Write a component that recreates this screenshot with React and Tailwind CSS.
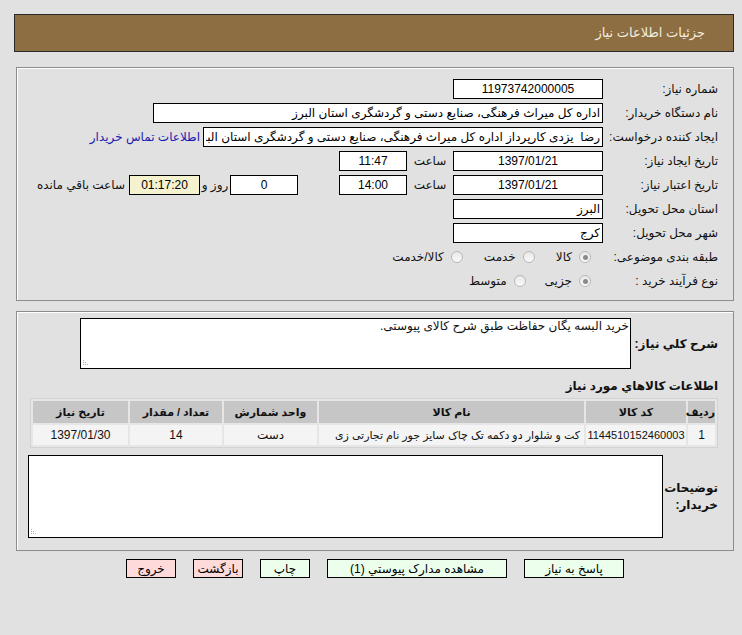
import React from "react";

const font = { fontFamily: '"Liberation Sans", "DejaVu Sans", sans-serif' };

function Field({ value, className = "", center = false }) {
    return (
        <input
            readOnly
            value={value}
            dir="rtl"
            className={`h-[20px] border border-black bg-white px-[2px] text-[12px] text-black outline-none ${center ? "text-center" : "text-right"} ${className}`}
        />
    );
}

function Radio({ checked, label }) {
    return (
        <div className="flex items-center gap-[7px]">
            <span className="flex h-[12px] w-[12px] items-center justify-center rounded-full border border-[#b8b8b8] bg-gradient-to-b from-[#e8e8e8] to-[#fafafa]">
                {checked && <span className="h-[5px] w-[5px] rounded-full bg-[#8a8a8a]" />}
            </span>
            <span>{label}</span>
        </div>
    );
}

function Row({ label, children }) {
    return (
        <div className="flex h-[24px] items-center gap-[5px]">
            <div className="w-[110px] shrink-0 whitespace-nowrap text-right">{label}</div>
            {children}
        </div>
    );
}

function Btn({ children, pink, className = "" }) {
    return (
        <button
            className={`h-[19px] border border-black text-[12px] leading-none text-black ${pink ? "bg-[#ffdada]" : "bg-[#ecffec]"} ${className}`}
        >
            {children}
        </button>
    );
}

// textarea with the resize grip drawn at the bottom-left, as the rtl page shows it
function Area({ value, className = "" }) {
    return (
        <div className={`relative shrink-0 ${className}`}>
            <textarea
                readOnly
                dir="rtl"
                value={value}
                className="h-full w-full resize-none border border-black bg-white px-[1px] text-[12px] leading-[15px] outline-none"
            />
            <svg className="absolute bottom-[3px] left-[3px]" width="6" height="6" viewBox="0 0 6 6">
                <rect x="0" y="0" width="1" height="1" fill="#b0b0b0" />
                <rect x="0" y="2" width="1" height="1" fill="#b0b0b0" />
                <rect x="2" y="2" width="1" height="1" fill="#b0b0b0" />
                <rect x="0" y="4" width="1" height="1" fill="#b0b0b0" />
                <rect x="2" y="4" width="1" height="1" fill="#b0b0b0" />
                <rect x="4" y="4" width="1" height="1" fill="#b0b0b0" />
            </svg>
        </div>
    );
}

export default function App() {
    const items = [
        { row: 1, code: "1144510152460003", name: "کت و شلوار دو دکمه تک چاک سایز جور نام تجارتی زی", unit: "دست", qty: 14, date: "1397/01/30" },
    ];

    return (
        <div dir="rtl" style={font} className="min-h-[635px] w-[742px] bg-[#e1e1e1] pt-[14px] text-[12px] text-[#111]">
            <div className="ml-[14px] mr-[8px] flex h-[38px] items-center border border-[#2a2a2a] bg-[#8c6e42] pr-[28px] text-[13px] text-[#f4ecdc]">
                جزئیات اطلاعات نیاز
            </div>

            <div className="ml-[16px] mr-[8px] mt-[15px] border border-[#8c8c8c] px-[15px] pb-[7px] pt-[9px] shadow-[inset_1px_1px_0_#ffffff]">
                <Row label="شماره نیاز:">
                    <Field value="11973742000005" center className="w-[150px]" />
                </Row>
                <Row label="نام دستگاه خریدار:">
                    <Field value="اداره کل میراث فرهنگی، صنایع دستی و گردشگری استان البرز" className="w-[450px]" />
                </Row>
                <Row label="ایجاد کننده درخواست:">
                    <Field value="رضا  یزدی کارپرداز اداره کل میراث فرهنگی، صنایع دستی و گردشگری استان البرز" className="w-[400px]" />
                    <a className="mr-[-2px] whitespace-nowrap text-[#1a1ab0]">اطلاعات تماس خریدار</a>
                </Row>
                <div className="flex h-[24px] items-center">
                    <div className="w-[115px] shrink-0 whitespace-nowrap text-right">تاریخ ایجاد نیاز:</div>
                    <Field value="1397/01/21" center className="w-[150px]" />
                    <div className="w-[46px] text-center">ساعت</div>
                    <Field value="11:47" center className="w-[68px]" />
                </div>
                <div className="flex h-[24px] items-center">
                    <div className="w-[115px] shrink-0 whitespace-nowrap text-right">تاریخ اعتبار نیاز:</div>
                    <Field value="1397/01/21" center className="w-[150px]" />
                    <div className="w-[46px] text-center">ساعت</div>
                    <Field value="14:00" center className="w-[68px]" />
                    <div className="w-[41px]" />
                    <Field value="0" center className="w-[68px]" />
                    <div className="w-[30px] whitespace-nowrap text-center">روز و</div>
                    <Field value="01:17:20" center className="w-[71px] !bg-[#f5f2cf]" />
                    <div className="mr-[4px] whitespace-nowrap">ساعت باقي مانده</div>
                </div>
                <Row label="استان محل تحویل:">
                    <Field value="البرز" className="w-[150px]" />
                </Row>
                <Row label="شهر محل تحویل:">
                    <Field value="کرج" className="w-[150px]" />
                </Row>
                <Row label="طبقه بندی موضوعی:">
                    <div className="flex items-center gap-[21px] pr-[12px]">
                        <Radio checked label="کالا" />
                        <Radio label="خدمت" />
                        <Radio label="کالا/خدمت" />
                    </div>
                </Row>
                <Row label="نوع فرآیند خرید :">
                    <div className="flex items-center gap-[19px] pr-[12px]">
                        <Radio checked label="جزیی" />
                        <Radio label="متوسط" />
                    </div>
                </Row>
            </div>

            <div className="ml-[16px] mr-[8px] mt-[10px] border border-[#8c8c8c] px-[15px] pb-[12px] pt-[6px] shadow-[inset_1px_1px_0_#ffffff]">
                <div className="flex items-center">
                    <div className="w-[87px] shrink-0 whitespace-nowrap text-right font-bold">شرح کلي نياز:</div>
                    <Area value="خرید البسه یگان حفاظت طبق شرح کالای پیوستی." className="h-[51px] w-[551px]" />
                </div>

                <div className="mt-[8px] text-right font-bold">اطلاعات کالاهاي مورد نياز</div>

                <table className="ml-[2px] mt-[3px] w-[688px] table-fixed border-separate border border-[#d2d2d2] bg-[#e6e6e6] [border-spacing:2px]">
                    <thead>
                        <tr className="h-[22px] bg-[#c6c6c6] text-[11px]">
                            <th className="w-[27px] whitespace-nowrap font-bold">ردیف</th>
                            <th className="w-[100px] font-bold">کد کالا</th>
                            <th className="w-[265px] font-bold">نام کالا</th>
                            <th className="w-[93px] font-bold">واحد شمارش</th>
                            <th className="w-[92px] font-bold">تعداد / مقدار</th>
                            <th className="font-bold">تاریخ نیاز</th>
                        </tr>
                    </thead>
                    <tbody>
                        {items.map((it) => (
                            <tr key={it.row} className="h-[20px] bg-[#f4f4f4]">
                                <td className="text-center">{it.row}</td>
                                <td className="text-center text-[11px]">{it.code}</td>
                                <td className="overflow-hidden whitespace-nowrap pr-[4px] text-right text-[11px]">{it.name}</td>
                                <td className="text-center">{it.unit}</td>
                                <td className="text-center">{it.qty}</td>
                                <td className="text-center">{it.date}</td>
                            </tr>
                        ))}
                    </tbody>
                </table>

                <div className="ml-[-4px] mt-[7px] flex items-center">
                    <div className="w-[55px] shrink-0 text-right font-bold leading-[17px]">توضیحات خریدار:</div>
                    <Area value="" className="h-[83px] w-[635px]" />
                </div>
            </div>

            <div className="mr-[8px] ml-[16px] mt-[8px] flex justify-center gap-[17px]">
                <Btn className="w-[100px]">پاسخ به نیاز</Btn>
                <Btn className="w-[180px]">مشاهده مدارک پیوستي (1)</Btn>
                <Btn className="w-[50px]">چاپ</Btn>
                <Btn pink className="w-[50px] whitespace-nowrap">بازگشت</Btn>
                <Btn pink className="w-[50px]">خروج</Btn>
            </div>
        </div>
    );
}
